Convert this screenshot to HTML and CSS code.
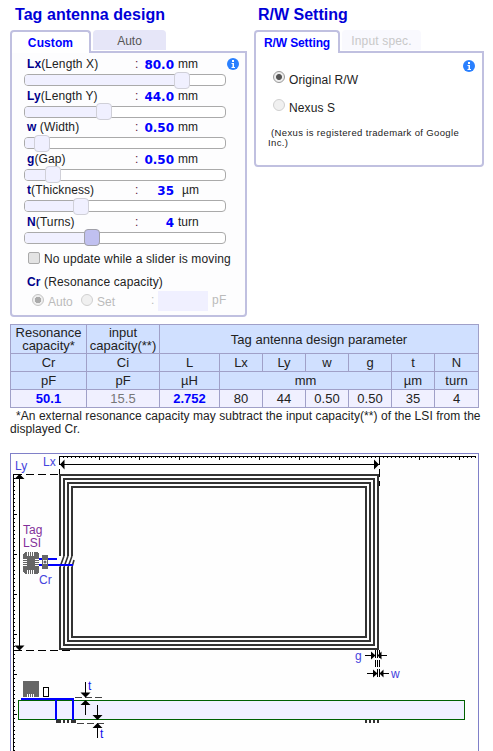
FILE: index.html
```html
<!DOCTYPE html>
<html lang="en">
<head>
<meta charset="utf-8">
<title>Tag antenna design</title>
<link rel="stylesheet" href="styles.css">
</head>
<body>
<main class="page">
  <div class="settings">
    <section class="tag">
      <h2>Tag antenna design</h2>
      <div class="tabs"><span class="tab active custom">Custom</span><span class="tab auto">Auto</span></div>
      <div class="panel tag-panel">
        <div class="param"><div class="line"><span class="name"><b>Lx</b>(Length X)</span><span class="colon">:</span><b class="val">80.0</b><span>mm</span></div><div class="slider"><i class="fill" style="width:157px"></i><i class="handle"></i></div></div>
        <div class="param"><div class="line"><span class="name"><b>Ly</b>(Length Y)</span><span class="colon">:</span><b class="val">44.0</b><span>mm</span></div><div class="slider"><i class="fill" style="width:79px"></i><i class="handle"></i></div></div>
        <div class="param"><div class="line"><span class="name"><b>w</b> (Width)</span><span class="colon">:</span><b class="val">0.50</b><span>mm</span></div><div class="slider"><i class="fill" style="width:17px"></i><i class="handle"></i></div></div>
        <div class="param"><div class="line"><span class="name"><b>g</b>(Gap)</span><span class="colon">:</span><b class="val">0.50</b><span>mm</span></div><div class="slider"><i class="fill" style="width:28px"></i><i class="handle"></i></div></div>
        <div class="param"><div class="line"><span class="name"><b>t</b>(Thickness)</span><span class="colon">:</span><b class="val">35</b><span class="micro">µm</span></div><div class="slider"><i class="fill" style="width:56px"></i><i class="handle"></i></div></div>
        <div class="param"><div class="line"><span class="name"><b>N</b>(Turns)</span><span class="colon">:</span><b class="val">4</b><span>turn</span></div><div class="slider"><i class="fill" style="width:67px"></i><i class="handle focus"></i></div></div>
        <div class="check"><i class="box"></i><span>No update while a slider is moving</span></div>
        <div class="cr-title"><b>Cr</b> (Resonance capacity)</div>
        <div class="cr-row"><i class="radio on"></i><span class="r-auto">Auto</span><i class="radio"></i><span class="r-set">Set</span><span class="r-colon">:</span><i class="field"></i><span class="unit">pF</span></div>
        <svg class="info" viewBox="0 0 12 12"><circle cx="6" cy="6" r="6"/><path d="M4.500 5H7v4h1v1H4.500V9h1V6h-1zM5 2h2v2H5z"/></svg>
      </div>
    </section>
    <section class="rw">
      <h2>R/W Setting</h2>
      <div class="tabs"><span class="tab active rw-tab">R/W Setting</span><span class="tab spec">Input spec.</span></div>
      <div class="panel rw-panel">
        <div class="choice"><i class="radio on"></i><span>Original R/W</span></div>
        <div class="choice"><i class="radio"></i><span>Nexus S</span></div>
        <p class="mark">(Nexus is registered trademark of Google<br>Inc.)</p>
        <svg class="info" viewBox="0 0 12 12"><circle cx="6" cy="6" r="6"/><path d="M4.500 5H7v4h1v1H4.500V9h1V6h-1zM5 2h2v2H5z"/></svg>
      </div>
    </section>
  </div>

  <table class="params">
    <colgroup><col class="c76"><col class="c73"><col class="c60"><col class="c43"><col class="c43"><col class="c43"><col class="c43"><col class="c43"><col class="c44"></colgroup>
    <tr class="head"><td>Resonance capacity*</td><td>input capacity(**)</td><td colspan="7">Tag antenna design parameter</td></tr>
    <tr><td>Cr</td><td>Ci</td><td>L</td><td>Lx</td><td>Ly</td><td>w</td><td>g</td><td>t</td><td>N</td></tr>
    <tr><td>pF</td><td>pF</td><td>µH</td><td colspan="4">mm</td><td>µm</td><td>turn</td></tr>
    <tr class="data"><td class="strong">50.1</td><td class="dim">15.5</td><td class="strong">2.752</td><td>80</td><td>44</td><td>0.50</td><td>0.50</td><td>35</td><td>4</td></tr>
  </table>
  <p class="note">*An external resonance capacity may subtract the input capacity(**) of the LSI from the<br>displayed Cr.</p>

  <div class="diagram">
    <svg viewBox="11 454 467 297" width="467" height="297">
      <defs>
        <pattern id="minor-x" x="59" y="456" width="4" height="4" patternUnits="userSpaceOnUse"><rect width="1" height="2"/></pattern>
        <pattern id="major-x" x="59" y="456" width="40" height="8" patternUnits="userSpaceOnUse"><rect width="1" height="4"/></pattern>
        <pattern id="minor-y" x="13" y="474" width="4" height="4" patternUnits="userSpaceOnUse"><rect width="2" height="1"/></pattern>
        <pattern id="major-y" x="13" y="474" width="8" height="40" patternUnits="userSpaceOnUse"><rect width="4" height="1"/></pattern>
      </defs>
      <g shape-rendering="crispEdges">
        <rect x="59" y="456" width="417" height="1"/>
        <rect x="59" y="456" width="417" height="2" fill="url(#minor-x)"/>
        <rect x="59" y="456" width="417" height="4" fill="url(#major-x)"/>
        <rect x="13" y="474" width="1" height="277"/>
        <rect x="13" y="474" width="2" height="277" fill="url(#minor-y)"/>
        <rect x="13" y="474" width="4" height="277" fill="url(#major-y)"/>
        <path class="thin" d="M60 464.500H379M19.500 475V650"/>
        <path class="thin dash" d="M14 474.500H71M14 650.500H71M59.500 457V486M379.500 457V486"/>
        <g class="coil">
          <path d="M60 556V475H378V649H60V567"/>
          <path d="M64 556V479H374V645H64V567"/>
          <path d="M68 556V483H370V641H68V567"/>
          <path d="M72 556V487H366V637H72V567"/>
        </g>
      </g>
      <path class="cross" d="M64 556L60 567M68 556L64 567M72 556L68 567M74 560L72 567"/>
      <path d="M60 464.500l4.500-5v10zM379 464.500l-5-5v10zM19.500 474l-5 5h10zM19.500 650.500l-5-5h10z"/>

      <g shape-rendering="crispEdges">
        <path class="wire" d="M39 559H57M39 565H73"/>
        <path class="chip" d="M23 554l2-2h12l2 2v18l-2 2H25l-2-2z"/>
        <path class="pins" d="M27.500 552v4M29.500 552v4M31.500 552v4M33.500 552v4M27.500 570v4M29.500 570v4M31.500 570v4M33.500 570v4M23 559.500h4M23 561.500h4M23 563.500h4M23 565.500h4M35 559.500h4M35 561.500h4M35 563.500h4M35 565.500h4"/>
        <path class="chip" d="M42 555h6v5h-6zM42 564h6v5h-6zM42 560h1v4h-1zM47 560h1v4h-1z"/>
      </g>
      <circle class="chip" cx="45" cy="562" r="1.500"/>

      <g shape-rendering="crispEdges">
        <rect class="board" x="18.500" y="700.500" width="446" height="19"/>
        <rect class="chip" x="23" y="681" width="16" height="16"/>
        <path class="pins" d="M27.500 694v3M29.500 694v3M31.500 694v3M33.500 694v3"/>
        <rect class="cap" x="43.500" y="687.500" width="5" height="9"/>
        <path class="wire" d="M21 698.500H74M56 698V720M73 698V720"/>
        <path class="foot" d="M56 721.500H61M63 721.500h2M67 721.500h2M71 721.500h5M365 721.500h2M369 721.500h2M373 721.500h2M377 721.500h2"/>
        <path class="thin" d="M85.500 682V697M85.500 701V715M97.500 705V719M97.500 724V738"/>
        <path class="guide" d="M75 697.500H102M77 723.500H104"/>
        <path class="thin" d="M365 655.500H372M381 655.500H387M367 673.500H373M383 673.500H389M375.500 650V658M377.500 650V658M379.500 650V658M375.500 660V667M377.500 660V667M379.500 660V667M377.500 669V677M379.500 669V677"/>
      </g>
      <path d="M85.500 697.500l-5-5h10zM85.500 700l-5 5h10zM97.500 720l-5-5h10zM97.500 723l-5 5h10zM375.500 655.500l-4.500-4v8zM377.500 655.500l4-4v8zM377.500 673.500l-4.500-4v8zM379.500 673.500l4-4v8z"/>
      <g class="labels">
        <text x="15" y="470">Ly</text><text x="43" y="466">Lx</text>
        <text class="purple" x="23" y="534">Tag</text><text class="purple" x="23" y="547">LSI</text>
        <text x="39" y="584">Cr</text><text class="t" x="88" y="690">t</text><text class="t" x="100" y="738">t</text>
        <text x="355" y="660">g</text><text x="391" y="678">w</text>
      </g>
    </svg>
  </div>
</main>
</body>
</html>
```

FILE: styles.css
```css
* { box-sizing: border-box; }
body { margin: 0; overflow: hidden; background: #fff; color: #222; font: 12px/16px "Liberation Sans", Arial, sans-serif; }
.page { height: 751px; padding: 5px 0 0 10px; overflow: hidden; }
i { display: block; flex: none; }
.settings { display: flex; gap: 7px; height: 319px; align-items: flex-start; }
.tag { width: 237px; }
.rw { width: 230px; }
h2 { margin: 0; padding-left: 5px; height: 25px; font-size: 16px; line-height: 20px; letter-spacing: .06px; color: #0000d8; white-space: nowrap; }
.rw h2 { padding-left: 4px; letter-spacing: 0; }
.tabs { display: flex; gap: 2px; height: 21px; }
.tab { height: 20px; border-radius: 4px 4px 0 0; text-align: center; line-height: 22px; }
.tab.active { position: relative; z-index: 1; height: 23px; border: 2px solid #c0c0e0; border-bottom: 0; background: #fff; color: #00f; font-weight: bold; }
.custom { width: 81px; letter-spacing: .1px; }
.tab.auto { width: 73px; background: #e6e6f8; color: #555; }
.rw-tab { width: 86px; letter-spacing: -.1px; }
.spec { width: 79px; background: #f9f9fe; color: #c8c8c8; letter-spacing: .15px; }
.panel { position: relative; border: 2px solid #c0c0e0; border-radius: 0 0 4px 4px; background: #fdfdfe; }
.tag-panel { height: 266px; padding: 3px 0 0 12px; }
.rw-panel { height: 116px; padding: 16px 10px 0 12px; background: #fff; }
.info { position: absolute; right: 6px; top: 5px; width: 12px; height: 12px; fill: #2a80ff; }
.rw-panel .info { right: 7px; top: 7px; }
.info path { fill: #fff; }
.param { height: 31.600px; }
.line { display: flex; height: 18px; padding-left: 3px; white-space: nowrap; line-height: 17px; }
.name { width: 108px; letter-spacing: .1px; }
.name b, .cr-title b { color: #00008b; }
.colon { width: 7px; color: #602040; }
.val { width: 32px; margin-right: 4px; color: #00f; font: bold 12px/18px "DejaVu Sans", sans-serif; text-align: right; }
.micro { padding-left: 4px; }
.slider { display: flex; align-items: center; width: 202px; height: 12px; border: 1px solid #aaa; border-radius: 4px; background: #fff; }
.fill { height: 10px; border-radius: 3px 0 0 3px; background: #f0f0ff; }
.handle { width: 16px; height: 17px; margin-left: -8px; border: 1px solid #d0d0d8; border-radius: 4px; background: #f0f0ff; }
.handle.focus { background: #c0c0f0; border-color: #a0a0a8; }
.check { display: flex; gap: 4px; padding: 4px 0 0 4px; height: 27px; line-height: 18px; letter-spacing: .14px; white-space: nowrap; }
.box { width: 12px; height: 12px; margin-top: 2px; border: 1px solid #aaa; border-radius: 2px; background: #e3e3e3; }
.cr-title { padding-left: 3px; letter-spacing: .14px; line-height: 18px; }
.cr-row { display: flex; height: 20px; padding-left: 8px; color: #bbb; line-height: 23px; }
.radio { width: 12px; height: 12px; margin-top: 3px; border: 1px solid #d0d0d0; border-radius: 50%; background: #f0f0f0; }
.radio.on { border-color: #c4c4c4; background: radial-gradient(circle, #aaa 0 3px, #eee 3.500px); }
.r-auto { width: 37px; padding-left: 4px; }
.r-set { width: 58px; padding-left: 4px; }
.r-colon { width: 7px; line-height: 18px; }
.field { width: 50px; height: 20px; background: #f0f0ff; }
.unit { margin-left: 4px; line-height: 19px; letter-spacing: .4px; }
.choice { display: flex; gap: 4px; height: 28px; padding-left: 5px; line-height: 22px; letter-spacing: .1px; }
.choice .radio { margin-top: 2px; }
.choice .on { border-color: #999; background: radial-gradient(circle, #555 0 2.500px, #eee 3.500px); }
.mark { margin: 3px 0 0; text-indent: 3px; font-size: 9.500px; line-height: 10px; letter-spacing: .36px; white-space: nowrap; }
.params { width: 469px; table-layout: fixed; border-collapse: collapse; color: #222; font-size: 13px; line-height: 13px; text-align: center; }
.params td { height: 18px; padding: 0; border: 1px solid #a0a0c8; background: #d0e0ff; }
.params .head td { height: 29px; }
.params .data td { background: #f0f0ff; }
.c76 { width: 76px; } .c73 { width: 73px; } .c60 { width: 60px; } .c43 { width: 43px; } .c44 { width: 44px; }
.params .strong { color: #00f; font-weight: bold; }
.params .dim { color: #777; }
.note { height: 45px; margin: 0; padding-top: 2px; text-indent: 6px; line-height: 13px; letter-spacing: .05px; white-space: nowrap; }
.diagram { width: 469px; height: 298px; border: 1px solid #8080c8; border-bottom: 0; background: #fefefe; }
.diagram svg { display: block; }
.thin { fill: none; stroke: #000; }
.dash { stroke-dasharray: 8 4; }
.guide { fill: none; stroke: #444; stroke-dasharray: 7 3; }
.coil { fill: none; stroke: #333; stroke-width: 2; }
.foot { fill: none; stroke: #333; stroke-width: 3; }
.cross { fill: none; stroke: #333; stroke-width: 1.600; }
.wire { fill: none; stroke: #00f; stroke-width: 2; }
.chip { fill: #666; }
.pins { stroke: #fff; }
.board { fill: #f0f0ff; stroke: #006000; }
.cap { fill: #fff; stroke: #000; }
.labels { fill: #44d; font-size: 12px; }
.labels .t { fill: #11e; }
.purple { fill: #82309a; }
```
